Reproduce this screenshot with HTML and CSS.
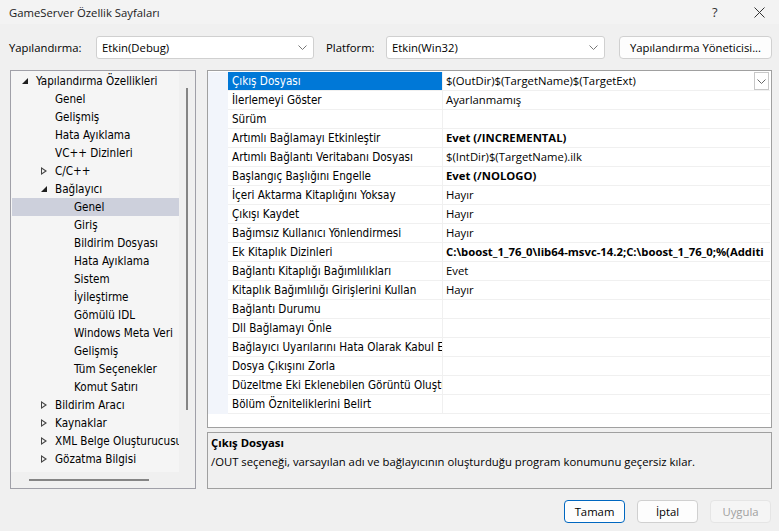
FILE: index.html
```html
<!DOCTYPE html>
<html lang="tr">
<head>
  <meta charset="utf-8">
  <title>GameServer Özellik Sayfaları</title>
  <link rel="stylesheet" href="styles.css">
</head>
<body>
  <div class="titlebar">
    <span class="title">GameServer Özellik Sayfaları</span>
    <span class="help">?</span>
    <span class="close">
      <svg width="11" height="11" viewBox="0 0 11 11"><path d="M0.5 0.5L10.5 10.5M10.5 0.5L0.5 10.5" stroke="#333" stroke-width="1" fill="none"/></svg>
    </span>
  </div>

  <div class="toolbar">
    <span class="label">Yapılandırma:</span>
    <div class="combo combo-config">
      <span>Etkin(Debug)</span>
      <svg class="chev" width="9" height="5" viewBox="0 0 9 5"><path d="M0.5 0.5L4.5 4.5L8.5 0.5" stroke="#777" fill="none"/></svg>
    </div>
    <span class="label label-platform">Platform:</span>
    <div class="combo combo-platform">
      <span>Etkin(Win32)</span>
      <svg class="chev" width="9" height="5" viewBox="0 0 9 5"><path d="M0.5 0.5L4.5 4.5L8.5 0.5" stroke="#777" fill="none"/></svg>
    </div>
    <button class="btn btn-manager">Yapılandırma Yöneticisi...</button>
  </div>

  <div class="main">
    <div class="tree-panel">
      <ul class="tree">
        <li class="lv0"><span class="tri tri-open"></span>Yapılandırma Özellikleri</li>
        <li class="lv1">Genel</li>
        <li class="lv1">Gelişmiş</li>
        <li class="lv1">Hata Ayıklama</li>
        <li class="lv1">VC++ Dizinleri</li>
        <li class="lv1"><span class="tri tri-closed"></span>C/C++</li>
        <li class="lv1"><span class="tri tri-open"></span>Bağlayıcı</li>
        <li class="lv2 selected">Genel</li>
        <li class="lv2">Giriş</li>
        <li class="lv2">Bildirim Dosyası</li>
        <li class="lv2">Hata Ayıklama</li>
        <li class="lv2">Sistem</li>
        <li class="lv2">İyileştirme</li>
        <li class="lv2">Gömülü IDL</li>
        <li class="lv2">Windows Meta Veri</li>
        <li class="lv2">Gelişmiş</li>
        <li class="lv2">Tüm Seçenekler</li>
        <li class="lv2">Komut Satırı</li>
        <li class="lv1"><span class="tri tri-closed"></span>Bildirim Aracı</li>
        <li class="lv1"><span class="tri tri-closed"></span>Kaynaklar</li>
        <li class="lv1"><span class="tri tri-closed"></span>XML Belge Oluşturucusu</li>
        <li class="lv1"><span class="tri tri-closed"></span>Gözatma Bilgisi</li>
      </ul>
      <div class="vscroll"><div class="vthumb"></div></div>
      <div class="hscroll"><div class="hthumb"></div></div>
      <div class="corner"></div>
    </div>

    <div class="right-col">
      <div class="grid-panel">
        <div class="prop selected"><span class="name">Çıkış Dosyası</span><span class="value">$(OutDir)$(TargetName)$(TargetExt)<span class="drop"><svg width="9" height="5" viewBox="0 0 9 5"><path d="M0.5 0.5L4.5 4.5L8.5 0.5" stroke="#666" fill="none"/></svg></span></span></div>
        <div class="prop"><span class="name">İlerlemeyi Göster</span><span class="value">Ayarlanmamış</span></div>
        <div class="prop"><span class="name">Sürüm</span><span class="value"></span></div>
        <div class="prop"><span class="name">Artımlı Bağlamayı Etkinleştir</span><span class="value bold">Evet (/INCREMENTAL)</span></div>
        <div class="prop"><span class="name">Artımlı Bağlantı Veritabanı Dosyası</span><span class="value">$(IntDir)$(TargetName).ilk</span></div>
        <div class="prop"><span class="name">Başlangıç Başlığını Engelle</span><span class="value bold">Evet (/NOLOGO)</span></div>
        <div class="prop"><span class="name">İçeri Aktarma Kitaplığını Yoksay</span><span class="value">Hayır</span></div>
        <div class="prop"><span class="name">Çıkışı Kaydet</span><span class="value">Hayır</span></div>
        <div class="prop"><span class="name">Bağımsız Kullanıcı Yönlendirmesi</span><span class="value">Hayır</span></div>
        <div class="prop"><span class="name">Ek Kitaplık Dizinleri</span><span class="value bold">C:\boost_1_76_0\lib64-msvc-14.2;C:\boost_1_76_0;%(Additi</span></div>
        <div class="prop"><span class="name">Bağlantı Kitaplığı Bağımlılıkları</span><span class="value">Evet</span></div>
        <div class="prop"><span class="name">Kitaplık Bağımlılığı Girişlerini Kullan</span><span class="value">Hayır</span></div>
        <div class="prop"><span class="name">Bağlantı Durumu</span><span class="value"></span></div>
        <div class="prop"><span class="name">Dll Bağlamayı Önle</span><span class="value"></span></div>
        <div class="prop"><span class="name">Bağlayıcı Uyarılarını Hata Olarak Kabul Et</span><span class="value"></span></div>
        <div class="prop"><span class="name">Dosya Çıkışını Zorla</span><span class="value"></span></div>
        <div class="prop"><span class="name">Düzeltme Eki Eklenebilen Görüntü Oluştur</span><span class="value"></span></div>
        <div class="prop"><span class="name">Bölüm Özniteliklerini Belirt</span><span class="value"></span></div>
      </div>
      <div class="desc">
        <div class="desc-title">Çıkış Dosyası</div>
        <div class="desc-text">/OUT seçeneği, varsayılan adı ve bağlayıcının oluşturduğu program konumunu geçersiz kılar.</div>
      </div>
    </div>
  </div>

  <div class="buttons">
    <button class="btn btn-ok">Tamam</button>
    <button class="btn">İptal</button>
    <button class="btn btn-disabled">Uygula</button>
  </div>
</body>
</html>
```

FILE: styles.css
```css
* {
  box-sizing: border-box;
}
body {
  margin: 0;
  width: 779px;
  height: 531px;
  overflow: hidden;
  background: #f0f0f0;
  font-family: "Open Sans", "Noto Sans", sans-serif;
  font-size: 11.3px;
  color: #000;
}
.titlebar {
  height: 24px;
  background: #f3f3f3;
  display: flex;
  align-items: center;
  padding-left: 9px;
}
.title {
  flex: 1;
  color: #1a1a1a;
}
.help {
  width: 12px;
  margin-right: 30px;
  font-size: 13px;
  color: #333;
}
.close {
  width: 11px;
  margin-right: 14px;
  display: flex;
}
.toolbar {
  display: flex;
  align-items: center;
  height: 23px;
  margin-top: 12px;
  padding-left: 9px;
}
.label {
  width: 87px;
}
.label-platform {
  width: 60px;
  margin-left: 12px;
}
.combo {
  height: 23px;
  background: #fff;
  border: 1px solid #d0d0d0;
  border-radius: 3px;
  display: flex;
  align-items: center;
  justify-content: space-between;
  padding: 0 6px 0 5px;
}
.combo-config {
  width: 218px;
}
.combo-platform {
  width: 219px;
}
.btn {
  font: inherit;
  height: 23px;
  background: #fdfdfd;
  border: 1px solid #d0d0d0;
  border-radius: 4px;
  padding: 0;
  color: #000;
}
.btn-manager {
  width: 153px;
  margin-left: 14px;
}
.main {
  display: flex;
  gap: 11px;
  margin-top: 11px;
  padding-left: 10px;
}
.tree-panel {
  width: 186px;
  height: 419px;
  border: 1px solid #a0a0a8;
  display: grid;
  grid-template-columns: 1fr 16px;
  grid-template-rows: 1fr 16px;
}
.tree {
  list-style: none;
  margin: 0;
  padding: 1px 0 0 1px;
  background: #f5f5f5;
  overflow: hidden;
  font-family: "DejaVu Sans Condensed", "DejaVu Sans", sans-serif;
  font-size: 11.6px;
}
.tree li {
  height: 18px;
  line-height: 18px;
  white-space: nowrap;
  position: relative;
}
.lv0 {
  padding-left: 24px;
}
.lv1 {
  padding-left: 43px;
}
.lv2 {
  padding-left: 62px;
}
.tree .selected {
  background: #cdd0dc;
}
.tri {
  position: absolute;
  top: 6px;
}
.lv0 .tri {
  left: 10px;
}
.lv1 .tri {
  left: 29px;
}
.tri-open {
  width: 0;
  height: 0;
  border-left: 6px solid transparent;
  border-bottom: 6px solid #1e1e1e;
}
.tri-closed {
  width: 6px;
  height: 8px;
  top: 5px;
  background: linear-gradient(#444, #444);
  clip-path: polygon(0 0, 100% 50%, 0 100%, 0 0, 1px 2px, 1px calc(100% - 2px), calc(100% - 2px) 50%, 1px 2px);
}
.vscroll {
  background: #f0f0f0;
  display: flex;
  justify-content: center;
  padding-top: 17px;
}
.vthumb {
  width: 2px;
  height: 322px;
  background: #858585;
}
.hscroll {
  background: #f0f0f0;
  padding: 7px 0 0 18px;
}
.hthumb {
  width: 120px;
  height: 2px;
  background: #858585;
}
.corner {
  background: #f0f0f0;
}
.right-col {
  display: flex;
  flex-direction: column;
  gap: 4px;
}
.grid-panel {
  width: 565px;
  height: 358px;
  border: 1px solid #a0a0a0;
  background: #fff;
  padding: 1px 1px 0 0;
}
.prop {
  display: flex;
  height: 19px;
  border-left: 20px solid #f2f5fb;
}
.name {
  width: 215px;
  padding-left: 4px;
  line-height: 18px;
  border-bottom: 1px solid #f0f0f0;
  border-right: 1px solid #f0f0f0;
  font-family: "DejaVu Sans Condensed", "DejaVu Sans", sans-serif;
  font-size: 11.6px;
  white-space: nowrap;
  overflow: hidden;
}
.value {
  flex: 1;
  position: relative;
  padding-left: 3px;
  line-height: 18px;
  border-bottom: 1px solid #f0f0f0;
  white-space: nowrap;
  overflow: hidden;
}
.bold {
  font-weight: 700;
}
.prop.selected .name {
  background: #0078d7;
  color: #fff;
}
.drop {
  position: absolute;
  right: 1px;
  top: 0;
  width: 15px;
  height: 18px;
  background: #fff;
  border: 1px solid #c8c8c8;
  display: flex;
  align-items: center;
  justify-content: center;
}
.desc {
  width: 565px;
  height: 57px;
  border: 1px solid #a0a0a0;
  padding: 1px 3px;
}
.desc-title {
  font-weight: 700;
  line-height: 18px;
}
.desc-text {
  line-height: 20px;
}
.buttons {
  display: flex;
  justify-content: flex-end;
  gap: 12px;
  margin-top: 11px;
  padding-right: 8px;
}
.buttons .btn {
  width: 61px;
}
.btn-ok {
  border: 1px solid #0067c0;
  box-shadow: inset 0 0 0 1px #fff;
}
.btn-disabled {
  background: #f5f5f5;
  color: #a0a0a0;
  border-color: #e5e5e5;
}
```
